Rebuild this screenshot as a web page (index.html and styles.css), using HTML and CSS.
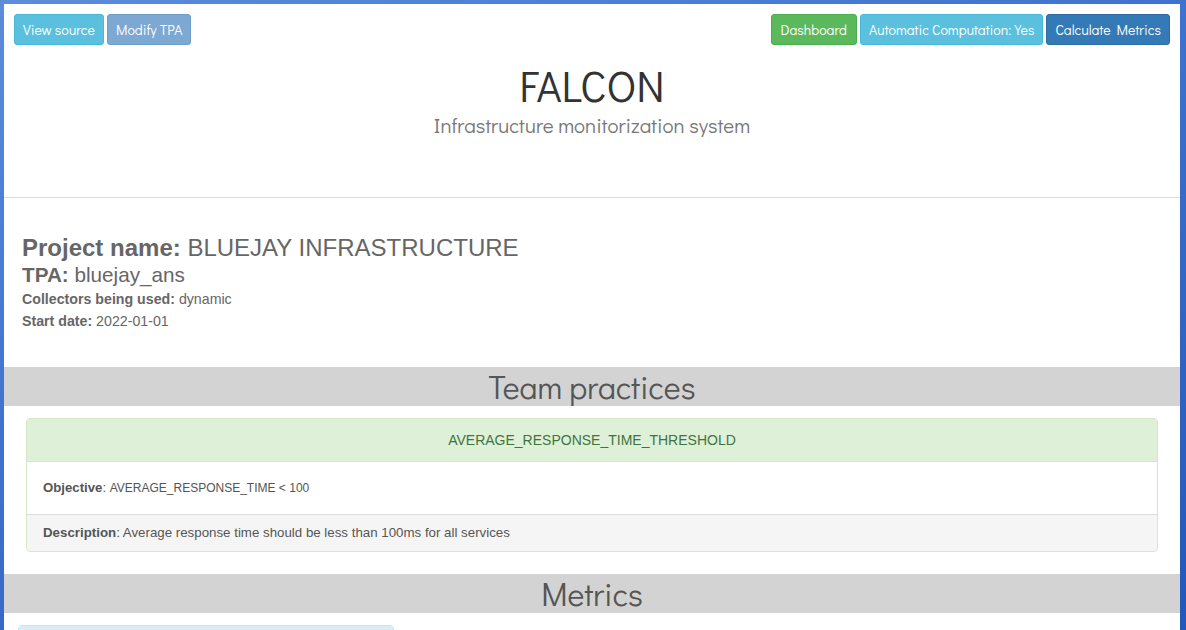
FILE: index.html
```html
<!DOCTYPE html>
<html>
<head>
<meta charset="utf-8">
<title>FALCON</title>
<link rel="stylesheet" href="styles.css">
</head>
<body>
<div class="page">
  <div class="topbar">
    <div class="btns">
      <a class="btn btn-info">View source</a>
      <a class="btn btn-tpa">Modify TPA</a>
    </div>
    <div class="btns">
      <a class="btn btn-success">Dashboard</a>
      <a class="btn btn-info">Automatic Computation: Yes</a>
      <a class="btn btn-primary">Calculate Metrics</a>
    </div>
  </div>
  <header class="hero">
    <h1 class="title">FALCON</h1>
    <p class="subtitle">Infrastructure monitorization system</p>
  </header>
  <hr class="divider">
  <section class="project">
    <h2 class="project-name"><b>Project name:</b> BLUEJAY INFRASTRUCTURE</h2>
    <h3 class="project-tpa"><b>TPA:</b> bluejay_ans</h3>
    <p class="project-meta"><b>Collectors being used:</b> dynamic</p>
    <p class="project-meta"><b>Start date:</b> 2022-01-01</p>
  </section>
  <h2 class="band">Team practices</h2>
  <div class="panel-wrap">
    <div class="panel panel-success">
      <div class="panel-heading">AVERAGE_RESPONSE_TIME_THRESHOLD</div>
      <div class="panel-body"><b>Objective</b>: <span class="small">AVERAGE_RESPONSE_TIME &lt; 100</span></div>
      <div class="panel-footer"><b>Description</b>: Average response time should be less than 100ms for all services</div>
    </div>
  </div>
  <h2 class="band band-metrics">Metrics</h2>
  <div class="metrics">
    <div class="panel panel-info">
      <div class="panel-heading info-heading">&nbsp;</div>
    </div>
  </div>
</div>
</body>
</html>
```

FILE: styles.css
```css
html, body {
  margin: 0;
  padding: 0;
  height: 100%;
  overflow: hidden;
}
body {
  background: linear-gradient(160deg, #5b8ddb 0%, #3f73cf 40%, #2457bb 100%);
  font-family: "Liberation Sans", Arial, sans-serif;
}
.page {
  margin: 4px 0 0 4px;
  width: 1176px;
  height: 626px;
  background: #fff;
  overflow: hidden;
}
.topbar {
  display: flex;
  justify-content: space-between;
  padding: 10px 10px 0 10px;
}
.btns {
  display: flex;
  gap: 3px;
}
.btn {
  display: inline-flex;
  align-items: center;
  height: 31px;
  box-sizing: border-box;
  padding: 0 8px;
  border: 1px solid transparent;
  border-radius: 3px;
  color: #fff;
  font-family: "Didact Gothic", Lato, "Noto Sans", sans-serif;
  font-size: 14px;
  white-space: nowrap;
}
.btn-info { background: #5bc0de; border-color: #46b8da; }
.btn-tpa { background: #7ca8d1; border-color: #6e9dca; }
.btn-success { background: #5cb85c; border-color: #4cae4c; padding: 0 9px; }
.btn-primary { background: #337ab7; border-color: #2e6da4; }

.hero {
  text-align: center;
  height: 152px;
}
.title {
  margin: 0;
  padding-top: 15px;
  font-family: "Didact Gothic", Lato, "Noto Sans", sans-serif;
  font-weight: 400;
  font-size: 43px;
  line-height: 50px;
  color: #333;
}
.subtitle {
  margin: 3px 0 0;
  font-family: "Didact Gothic", Lato, "Noto Sans", sans-serif;
  font-size: 20.7px;
  line-height: 24px;
  color: #777;
}
.divider {
  margin: 0;
  border: 0;
  border-top: 1px solid #ddd;
}
.project {
  padding: 36px 18px 0;
  color: #666;
  height: 133px;
}
.project-name {
  margin: 0;
  font-size: 24px;
  line-height: 28px;
  font-weight: 400;
}
.project-tpa {
  margin: 0;
  font-size: 20.7px;
  line-height: 26px;
  font-weight: 400;
}
.project-meta {
  margin: 0;
  font-size: 14.2px;
  line-height: 22px;
}
.band {
  margin: 0;
  height: 39px;
  background: #d3d3d3;
  text-align: center;
  font-family: "Didact Gothic", Lato, "Noto Sans", sans-serif;
  font-weight: 400;
  font-size: 32px;
  line-height: 39px;
  color: #555;
}
.panel-wrap {
  padding: 12px 22px 22px;
}
.panel {
  border: 1px solid #d6e9c6;
  border-radius: 4px;
  overflow: hidden;
  font-size: 13.2px;
  color: #555;
}
.panel-heading {
  background: #dff0d8;
  color: #3c763d;
  text-align: center;
  height: 42px;
  line-height: 42px;
  font-size: 14px;
  border-bottom: 1px solid #d6e9c6;
}
.panel-body {
  height: 52px;
  line-height: 52px;
  padding: 0 16px;
  border-bottom: 1px solid #ddd;
}
.panel-footer {
  background: #f5f5f5;
  height: 36px;
  line-height: 36px;
  padding: 0 16px;
  font-size: 13.3px;
}
.small { font-size: 12px; }
.metrics {
  padding: 12px 0 0 14px;
}
.panel-info {
  width: 374px;
  border-color: #bce8f1;
}
.info-heading {
  background: #d9edf7;
  border-color: #bce8f1;
}
```
